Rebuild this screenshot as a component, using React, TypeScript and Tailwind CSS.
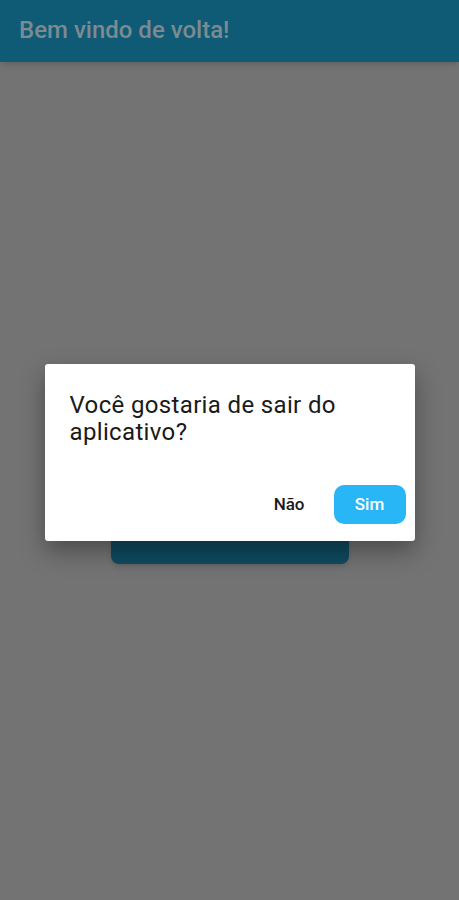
export default function App() {
  return (
    <div className="relative flex h-[900px] w-[459px] flex-col overflow-hidden bg-[#737373] font-['Roboto',sans-serif]">
      <header className="flex h-[62px] shrink-0 items-center bg-[#0f5a74] px-[19px] pb-[2px] shadow-md">
        <h1 className="text-[24px] font-medium text-[#7b8b92]">Bem vindo de volta!</h1>
      </header>

      <main className="flex flex-1 flex-col items-center pt-[302px]">
        <div className="relative flex w-[370px] flex-col items-center">
          <div className="absolute left-[66px] top-[120px] h-[80px] w-[238px] rounded-[8px] bg-[#0f4a60] shadow-md" />
          <div className="relative z-10 flex w-[370px] flex-col rounded-[3px] bg-white px-[25px] pt-[28px] pb-[17px] shadow-[0_10px_24px_rgba(0,0,0,0.35)]">
            <p className="text-[24px] leading-[27px] tracking-[0.35px] text-[#1a1a1a]">
              Você gostaria de sair do aplicativo?
            </p>
            <div className="mt-[39px] -mr-[16px] flex items-center justify-end gap-[29px]">
              <button type="button" className="text-[17px] font-medium text-[#1a1a1a]">
                Não
              </button>
              <button
                type="button"
                className="h-[39px] w-[72px] rounded-[10px] bg-[#29b6f6] text-[17px] font-medium text-white"
              >
                Sim
              </button>
            </div>
          </div>
        </div>
      </main>
    </div>
  );
}
